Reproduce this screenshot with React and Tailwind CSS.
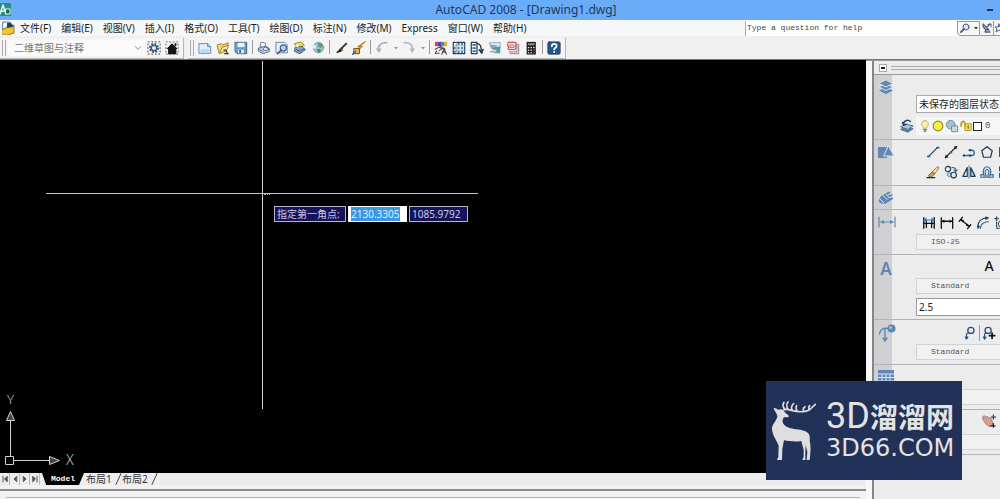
// src/App.jsx

const MENUS = [
  '文件(F)',
  '编辑(E)',
  '视图(V)',
  '插入(I)',
  '格式(O)',
  '工具(T)',
  '绘图(D)',
  '标注(N)',
  '修改(M)',
  'Express',
  '窗口(W)',
  '帮助(H)',
];

const Svg = ({ children, className = 'w-4 h-4', box = '0 0 16 16' }) => (
  <svg
    viewBox={box}
    className={`shrink-0 ${className}`}
    fill="none"
    strokeLinecap="round"
    strokeLinejoin="round"
    aria-hidden="true"
  >
    {children}
  </svg>
);

/* ---------- Toolbar icons ---------- */

const icons = {
  gear: (
    <Svg className="w-3.5 h-3.5">
      <rect x="1" y="1" width="14" height="14" stroke="#333" strokeDasharray="2 2" strokeLinecap="butt" />
      <circle cx="8" cy="8" r="4.6" stroke="#3d5a78" strokeWidth="2.4" strokeDasharray="2 1.6" strokeLinecap="butt" />
      <circle cx="8" cy="8" r="3.2" stroke="#3d5a78" strokeWidth="1.6" fill="#dfe8f0" />
    </Svg>
  ),
  home: (
    <Svg className="w-3.5 h-3.5">
      <rect x="1" y="1" width="14" height="14" stroke="#555" strokeDasharray="2 2" strokeLinecap="butt" />
      <path d="M8 2.5 14.5 9H13v6H3.500V9H1.500Z" fill="#151515" />
      <path d="M11 2.500h2V6h-2z" fill="#151515" />
    </Svg>
  ),
  blank: (
    <Svg className="w-3.5 h-3.5">
      <path d="M1.500 3h9.500l3.500 3.500V14h-13z" fill="#e3f1fb" stroke="#57809f" />
      <path d="M3 9h10v4H3z" fill="#b9dcf4" />
      <path d="M11 3v3.500h3.500" stroke="#57809f" />
    </Svg>
  ),
  open: (
    <Svg className="w-3.5 h-3.5">
      <path d="M1.500 4.500 6 3l1.500 1.500L14 2l-2.500 8L4 14z" fill="#f2d568" stroke="#9a7d1f" />
      <path d="m4 14 3-7 7.500-2-2.500 6z" fill="#fbe99a" stroke="#9a7d1f" />
      <path d="M9 10.500c2-1 3 0 3.500 3M10 14.500h4" stroke="#333" strokeWidth="1.400" />
    </Svg>
  ),
  save: (
    <Svg className="w-3.5 h-3.5">
      <path d="M1.500 1.500h13v13h-11l-2-2z" fill="#6c9cc4" stroke="#31597d" />
      <path d="M4 2h8v5H4z" fill="#e8f1f8" />
      <path d="M4.500 10h7v4h-7z" fill="#dbe6ee" />
      <path d="M6 10.500h2v3H6z" fill="#31597d" />
    </Svg>
  ),
  print: (
    <Svg className="w-3.5 h-3.5">
      <path d="m5 1.500 5 1-1 5-5-1z" fill="#fff" stroke="#5d7290" />
      <path d="m2 8 8-2 4 2.500V12l-7 2.500L2 12z" fill="#c3d1e3" stroke="#4c6386" />
      <ellipse cx="10" cy="9" rx="3" ry="1.800" fill="#eef3f9" stroke="#4c6386" />
      <path d="m2 9.500 5 2.500" stroke="#4c6386" />
    </Svg>
  ),
  preview: (
    <Svg className="w-3.5 h-3.5">
      <path d="M1.500 1.500h9.500l3 3v9h-12.500z" fill="#e4f0fa" stroke="#587b9b" />
      <circle cx="9.500" cy="8" r="3.500" fill="#b5d3ee" stroke="#3f6184" strokeWidth="1.300" />
      <path d="m7 10.500-4 4" stroke="#3f6184" strokeWidth="2" />
    </Svg>
  ),
  publish: (
    <Svg className="w-3.5 h-3.5">
      <path d="m2 3 7-2 4 4-7 4z" fill="#f6dc48" stroke="#8f7a1c" />
      <path d="m3 7 7-1 4 4-6 4.500L2 12z" fill="#8ba7ca" stroke="#36516f" />
      <path d="m3 9.500 5 2 5-3" stroke="#36516f" />
      <circle cx="5" cy="5" r="2" fill="#e8f1a8" />
    </Svg>
  ),
  globe: (
    <Svg className="w-3.5 h-3.5">
      <circle cx="8.500" cy="7.500" r="6" fill="#9dbdd3" stroke="#7d99ad" />
      <path d="M8 2.500c3-.5 5 1 5.500 3L11 8 8 6z" fill="#5f9a60" />
      <path d="M6.500 9.500 10 9l1.500 2-3 3z" fill="#4f8c50" />
      <path d="m1 4 5 1-1 4-4-1z" fill="#e6eef4" />
    </Svg>
  ),
  brush: (
    <Svg className="w-3.5 h-3.5">
      <path d="M14 3 8 9" stroke="#343434" strokeWidth="2" />
      <path d="M9 7.500c-3 0-3 4-7 5.500 4 1 7-.5 8-3.500z" fill="#221d1a" />
      <path d="m8 9 1.500 1.500" stroke="#a66f2c" strokeWidth="1.500" />
    </Svg>
  ),
  match: (
    <Svg className="w-3.5 h-3.5">
      <path d="m15 1-6 5h3L7 11l2-4-2-.5z" fill="#f4bd27" stroke="#a2691b" />
      <path d="M2.500 8.500h6v6h-6z" fill="#f2b24a" stroke="#603b20" />
      <path d="m1 15 3-3" stroke="#3b62a3" strokeWidth="2" />
    </Svg>
  ),
  undo: (
    <Svg className="w-3.5 h-3.5">
      <path d="M13.500 2C8 1.500 4 4 4 9.500" stroke="#aeb4bb" strokeWidth="2" />
      <path d="M1 8.500h6.500L4.500 14z" fill="#aeb4bb" />
    </Svg>
  ),
  redo: (
    <Svg className="w-3.5 h-3.5">
      <path d="M2.500 2C8 1.500 12 4 12 9.500" stroke="#b4bac0" strokeWidth="2" />
      <path d="M15 8.500H8.500l3 5.500z" fill="#b4bac0" />
    </Svg>
  ),
  props: (
    <Svg className="w-3.5 h-3.5">
      <path d="M1 1h3.500v5H1z" fill="#d23a8e" />
      <path d="M4.500 1H8v5H4.500z" fill="#6a3bc0" />
      <path d="M8 1h3.500v5H8z" fill="#2d8fc4" />
      <path d="M11.500 1H15v5h-3.500z" fill="#d9b32c" />
      <path d="m5 4 6 5M1.500 9.500 6 7l3 2-3 2M3 11.500 1.500 14H6" stroke="#5b3d3a" strokeWidth="1.300" />
      <path d="m9 15 2.500-7L14 15m-4-2.500h3" stroke="#3a3f46" strokeWidth="1.300" />
    </Svg>
  ),
  design: (
    <Svg className="w-3.5 h-3.5">
      <rect x="1.500" y="1.500" width="13" height="13" fill="#eef5fa" stroke="#24435f" strokeWidth="1.400" />
      <path d="M5 2v12M2 5.500h12M2 10.500h12" stroke="#8ea7bc" />
      <path d="M7 3.500h1M11 3.500h1M7 8h1M11 8h1M7 12.500h1M11 12.500h1M3 8h.5M3 12.500h.5" stroke="#24435f" strokeWidth="1.600" />
    </Svg>
  ),
  palettes: (
    <Svg className="w-3.5 h-3.5">
      <path d="M1.500 1.500H8v13H1.500z" fill="#f3f8fb" stroke="#24435f" strokeWidth="1.400" />
      <path d="M3.500 4.500h2.500M3.500 8h2.500M3.500 11.500h2.500" stroke="#3f74a5" strokeWidth="2" />
      <path d="M8 3c4 0 4.500 3 5 8M10.500 10l3 4 1.500-4.500" stroke="#253849" strokeWidth="1.600" />
    </Svg>
  ),
  sheets: (
    <Svg className="w-3.5 h-3.5">
      <path d="m2 2 12-.5V8L6 10z" fill="#d8e5ec" stroke="#9ab1bf" />
      <path d="M1.500 4 10 5v5L4 9z" fill="#86a8bd" />
      <path d="m5 8 9-2v8H6l4-3z" fill="#5f93ac" />
      <path d="M3 12h6" stroke="#9fb9a7" strokeWidth="2" />
    </Svg>
  ),
  markup: (
    <Svg className="w-3.5 h-3.5">
      <path d="M5 14.500h9.500V4M3.500 12.500h9V3" stroke="#8b6d76" />
      <path d="M2 2.500 3.500 1l2 1 2-1 1.500 1 2-.5.5 2-.5 2 .5 2-1 2-2 .5-2-.5-2 .5-2-1 .5-2-1-2z" fill="#fdeff0" stroke="#d3475a" strokeWidth="1.300" />
      <path d="M5 4.500h4v3H5z" stroke="#d3475a" />
    </Svg>
  ),
  calc: (
    <Svg className="w-3.5 h-3.5">
      <path d="M3 1h10.500v14.500H3z" fill="#221c1a" />
      <path d="M4.500 2.500H12V5H4.500z" fill="#7d9478" />
      <path d="M5 7.500h.5M8 7.500h.5M11 7.500h.5M5 10.500h.5M8 10.500h.5M5 13.500h.5M8 13.500h.5" stroke="#e9e4df" strokeWidth="1.500" />
      <path d="M11 10.500h.5M11 13.500h.5" stroke="#c9503c" strokeWidth="1.500" />
    </Svg>
  ),
  help: (
    <Svg className="w-3.5 h-3.5">
      <rect x="1" y="1" width="14" height="14" rx="1.500" fill="#22588c" stroke="#153d66" />
      <path d="M5.500 6c0-3.500 5.500-3.500 5.500-.3 0 2-2.800 2-2.800 4M8.200 12.500v.2" stroke="#fff" strokeWidth="2" />
    </Svg>
  ),
};

const ToolButton = ({ name, label }) => (
  <button type="button" aria-label={label} className="w-[18px] h-4 flex items-center justify-center shrink-0">
    {icons[name]}
  </button>
);

const Caret = ({ label }) => (
  <button type="button" aria-label={label} className="w-[9px] h-4 flex items-center justify-center shrink-0">
    <Svg className="w-1 h-1" box="0 0 4 4">
      <path d="M0 1h4L2 3.500z" fill="#999" />
    </Svg>
  </button>
);

const Separator = () => (
  <span className="w-[5px] h-4 flex justify-center shrink-0">
    <span className="w-px h-3.5 bg-[#9b9b9b]" />
  </span>
);

const Grip = () => (
  <span className="flex gap-0.5 h-4 px-0.5 shrink-0">
    <span className="w-px bg-[#a9a9a9]" />
    <span className="w-px bg-[#a9a9a9]" />
  </span>
);

/* ---------- Header ---------- */

const TitleBar = () => (
  <header className="h-5 shrink-0 bg-[#6aacf8] flex items-center">
    <Svg className="w-3 h-3.5" box="0 0 12 14">
      <path d="M0 0h11v13H0z" fill="#2c8d86" />
      <path d="M0 11 3 2l3 9M1 8h4" stroke="#e8fbf6" strokeWidth="1.500" />
      <path d="M6 6h4v5H6z" fill="#1c5c5e" stroke="#e8fbf6" />
    </Svg>
    <h1 className="flex-1 text-center text-[12px] leading-4 text-[#1d3a5c] pl-[60px]">
      AutoCAD 2008 - [Drawing1.dwg]
    </h1>
    <button type="button" aria-label="最小化" className="w-5 h-5 flex items-center justify-center">
      <span className="w-1.5 h-0.5 bg-[#20344d]" />
    </button>
  </header>
);

const MenuBar = () => (
  <div className="h-4 shrink-0 bg-[#f5f7f9] flex items-center overflow-hidden">
    <Svg className="w-3.5 h-3.5 ml-0.5" box="0 0 14 14">
      <path d="M1 1h7l2 3v4H1z" fill="#fff" stroke="#5b7da0" />
      <path d="m0 9 5-3 7-2v8l-6 2H0z" fill="#eec534" stroke="#8d762a" />
      <path d="M5 2c3-1 6 1 6 4L5 7z" fill="#243d66" />
    </Svg>
    <nav className="flex gap-2.5 ml-1">
      {MENUS.map((menu) => (
        <button key={menu} type="button" className="text-[10px] leading-4 text-[#1c1c1c] whitespace-nowrap">
          {menu}
        </button>
      ))}
    </nav>
    <div className="flex ml-auto h-[15px]">
      <input
        aria-label="Type a question for help"
        placeholder="Type a question for help"
        className="w-[212px] border-l border-[#aaa] bg-white px-px font-['Liberation_Mono','Noto_Sans_CJK_SC',monospace] text-[8px] placeholder:text-[#444] outline-none"
      />
      <button type="button" aria-label="搜索" className="w-[23px] border border-[#999] rounded-bl flex items-center justify-center gap-1 bg-[#f7f7f7]">
        <Svg className="w-2.5 h-2.5" box="0 0 10 10">
          <circle cx="6" cy="4" r="3" stroke="#4b5f88" fill="#dde8f5" />
          <path d="M4 6 1 9" stroke="#4b5f88" strokeWidth="1.800" />
        </Svg>
        <Svg className="w-1 h-1" box="0 0 4 4">
          <path d="M0 1h4L2 3.500z" fill="#333" />
        </Svg>
      </button>
      <button type="button" aria-label="通讯中心" className="w-3.5 border-b border-r border-[#999] flex items-center justify-center bg-[#f7f7f7]">
        <Svg className="w-2.5 h-2.5" box="0 0 10 10">
          <path d="M1 1c0 4 2 6 6 6zM5 4l3-3M3 9h5M4 6.500 3 9" stroke="#4b5f88" strokeWidth="1.300" />
          <path d="M6 1.500 9 1v3" stroke="#4b5f88" />
        </Svg>
      </button>
      <button type="button" aria-label="收藏夹" className="w-1.5 border-b border-[#999] overflow-hidden flex items-center bg-[#f7f7f7]">
        <Svg className="w-2.5 h-2.5" box="0 0 10 10">
          <path d="m5 1 1 3h3L7 6l1 3-3-2-3 2 1-3-2-2h3z" stroke="#4b5f88" />
        </Svg>
      </button>
    </div>
  </div>
);

const Toolbars = () => (
  <div className="h-6 shrink-0 bg-[#efefef] border-b border-[#777] flex items-start pt-0.5">
    <div className="w-[184px] h-[21px] flex items-center border-r border-b border-[#b5b5b5] bg-[#f4f4f4]">
      <Grip />
      <div className="relative flex items-center">
        <select
          aria-label="工作空间"
          className="appearance-none w-[137px] h-4 pl-1.5 bg-[#fafafa] text-[10px] leading-4 text-[#777] outline-none"
        >
          <option>二维草图与注释</option>
        </select>
        <Svg className="w-1.5 h-1.5 absolute right-1 pointer-events-none" box="0 0 6 6">
          <path d="m.5 1.500 2.500 3 2.500-3" stroke="#999" />
        </Svg>
      </div>
      <ToolButton name="gear" label="工作空间设置" />
      <ToolButton name="home" label="我的工作空间" />
    </div>
    <div className="ml-1 pr-0.5 h-[21px] flex items-center border-r border-b border-[#b5b5b5] bg-[#f4f4f4]">
      <Grip />
      <ToolButton name="blank" label="新建" />
      <ToolButton name="open" label="打开" />
      <ToolButton name="save" label="保存" />
      <Separator />
      <ToolButton name="print" label="打印" />
      <ToolButton name="preview" label="打印预览" />
      <ToolButton name="publish" label="发布" />
      <ToolButton name="globe" label="三维DWF" />
      <Separator />
      <ToolButton name="brush" label="特性匹配" />
      <ToolButton name="match" label="块编辑器" />
      <Separator />
      <ToolButton name="undo" label="放弃" />
      <Caret label="放弃列表" />
      <ToolButton name="redo" label="重做" />
      <Caret label="重做列表" />
      <Separator />
      <ToolButton name="props" label="特性" />
      <ToolButton name="design" label="设计中心" />
      <ToolButton name="palettes" label="工具选项板" />
      <ToolButton name="sheets" label="图纸集管理器" />
      <ToolButton name="markup" label="标记集管理器" />
      <ToolButton name="calc" label="快速计算器" />
      <Separator />
      <ToolButton name="help" label="帮助" />
    </div>
  </div>
);

/* ---------- Drawing area ---------- */

const DrawingArea = () => (
  <main className="relative flex-1 min-h-0 bg-black overflow-hidden">
    {/* Crosshair */}
    <div className="absolute left-[262px] top-px w-px h-[348px] bg-[#d8d8d8]" />
    <div className="absolute left-[46px] top-[133px] w-[432px] h-px bg-[#c8c8c8]" />
    <div className="absolute left-[264px] top-[134px] w-1.5 border-t border-dotted border-[#aaa]" />

    {/* Dynamic input */}
    <div className="absolute left-[274px] top-[146px] flex gap-0.5 text-[10px] leading-[14px] text-[#c9c9e6]">
      <label htmlFor="coord-x" className="w-[72px] h-4 px-0.5 border border-[#b4b4d0] bg-[#15145a] whitespace-nowrap">
        指定第一角点:
      </label>
      <div className="w-[59px] h-4 bg-white pl-[3px] py-px">
        <input
          id="coord-x"
          defaultValue="2130.3305"
          className="block w-[49px] h-3.5 bg-[#3b97e3] text-[#d9efff] outline-none"
        />
      </div>
      <input
        aria-label="Y"
        defaultValue="1085.9792"
        className="w-[59px] h-4 px-0.5 border border-[#b4b4d0] bg-[#15145a] outline-none"
      />
    </div>

    {/* UCS icon */}
    <svg viewBox="0 0 80 80" className="absolute left-0 bottom-1 w-20 h-20" fill="none" stroke="#d0d0d0">
      <path d="M5.500 67.500h8v8h-8zM10.500 67V32M14 71.500h35" />
      <path d="m10.500 22.500 4 9h-8zM59.500 71.500l-10-4v8z" fill="#444" />
      <text x="7" y="15" fontSize="13" fill="#c4c4c4" stroke="none" className="font-light">Y</text>
      <text x="66" y="76" fontSize="14" fill="#c4c4c4" stroke="none" className="font-light">X</text>
    </svg>
  </main>
);

const TabArrow = ({ d, label }) => (
  <button type="button" aria-label={label} className="w-2.5 h-3 border-r border-[#bbb] flex items-center justify-center">
    <Svg className="w-1.5 h-2" box="0 0 6 8">
      <path d={d} fill="#555" stroke="#555" />
    </Svg>
  </button>
);

const LayoutTab = ({ children }) => (
  <button type="button" className="flex items-center text-[10px] leading-3 text-[#333]">
    <span className="w-7 text-left">{children}</span>
    <Svg className="w-2 h-3" box="0 0 8 12">
      <path d="M2 11.500 7 .5" stroke="#444" />
    </Svg>
  </button>
);

const BottomBar = () => (
  <footer className="shrink-0 bg-[#f2f2f2]">
    <div className="h-3 flex bg-[#ededed]">
      <TabArrow label="第一个" d="M1 1v6M5 1.500 2.500 4 5 6.500z" />
      <TabArrow label="上一个" d="M4.500 1.500 2 4l2.500 2.500z" />
      <TabArrow label="下一个" d="M1.500 1.500 4 4 1.500 6.500z" />
      <TabArrow label="最后一个" d="M5 1v6M1 1.500 3.500 4 1 6.500z" />
      <button
        type="button"
        className="w-[42px] ml-0.5 h-3 bg-black text-white font-['Liberation_Mono',monospace] font-bold text-[8px] leading-3 text-center [clip-path:polygon(0_0,100%_0,88%_100%,10%_100%)]"
      >
        Model
      </button>
      <span className="w-0.5" />
      <LayoutTab>布局1</LayoutTab>
      <LayoutTab>布局2</LayoutTab>
    </div>
    <div className="mt-1 h-0.5 bg-[#8b8b8b]" />
    <div className="h-1.5" />
    <div className="h-px bg-[#b5b5b5] mx-1.5" />
    <div className="h-px" />
  </footer>
);

/* ---------- Dashboard panel ---------- */

const BLUE = '#5f87b5';

const strip = {
  layers: (
    <Svg>
      <path d="m8 8.500 7 3L8 15l-7-3.500z" fill={BLUE} />
      <path d="m8 5 7 3-7 3.500L1 8z" fill={BLUE} stroke="#dfe5ec" />
      <path d="m8 1 7 3.500L8 8 1 4.500z" fill={BLUE} stroke="#dfe5ec" />
    </Svg>
  ),
  shapes: (
    <Svg>
      <path d="M0 3h9v11H0z" fill={BLUE} />
      <path d="m10.500 2 5.500 10H6z" fill={BLUE} stroke="#dfe5ec" />
    </Svg>
  ),
  nav: (
    <Svg>
      <path d="m3 6 8-4.500 1.500 1L8 6l6.500-2v1.500L9 8.500l6-1V9l-8 5-5-1-1.500-2z" fill={BLUE} />
      <path d="m2 9 4 4M5 5.500l4 4M8 4l3 3.500" stroke="#dfe5ec" />
    </Svg>
  ),
  dim: (
    <Svg className="w-[18px] h-4" box="0 0 18 16">
      <path d="M1 3v10M17 3v10M3 8h12" stroke={BLUE} strokeWidth="1.200" />
      <path d="M2 8l4-2v4zM16 8l-4-2v4z" fill={BLUE} />
    </Svg>
  ),
  leader: (
    <Svg className="w-[18px] h-[18px]" box="0 0 18 18">
      <path d="M1.500 10C2 6 5 3.500 10 4.500M7 5v11M5 14l2 3 2-3" stroke={BLUE} strokeWidth="1.400" />
      <circle cx="13.500" cy="4.500" r="4" fill={BLUE} />
      <circle cx="12.500" cy="3.500" r="1.500" fill="#a9c1dc" />
    </Svg>
  ),
  table: (
    <Svg>
      <path d="M0 1h16v14H0z" fill={BLUE} />
      <path d="M0 5h16M0 8.500h16M0 12h16M4 5v10M8 5v10M12 5v10" stroke="#dce6f0" strokeLinecap="butt" />
    </Svg>
  ),
};

const INK = '#21384f';

const tools = {
  line: (
    <>
      <path d="M3 13 13 3" stroke={INK} strokeWidth="1.300" />
      <path d="M2 13h2M12.500 3h2" stroke="#1e6aa0" strokeWidth="2" />
    </>
  ),
  xline: (
    <>
      <path d="M1.500 14.500 14.500 1.500" stroke="#111" strokeWidth="1.400" />
      <path d="m1 15 1-4 3 3zM15 1l-4 1 3 3z" fill="#111" />
      <path d="M7.500 8.500h1" stroke="#1e6aa0" strokeWidth="2" />
    </>
  ),
  pline: (
    <>
      <path d="M2 12h9c4 0 4-6 0-6H8" stroke="#2d6ea0" strokeWidth="1.500" />
      <path d="M2 12h.5M9 6h.5M9 12h.5" stroke={INK} strokeWidth="2.500" />
    </>
  ),
  polygon: <path d="m8 2 6 4.500L12 14H4L2 6.500z" stroke={INK} strokeWidth="1.400" />,
  rect: <path d="M2 3h12v10H2z" stroke={INK} strokeWidth="1.400" />,
  erase: (
    <>
      <path d="m7 8 6-6 2 1-5 7z" fill="#f3e3a4" stroke="#8a6d2b" />
      <path d="m3 12 4-4 3 2-4 4z" fill="#d9a24c" stroke="#6d4a2c" />
      <path d="M1 14.500h9" stroke="#222" strokeWidth="1.300" />
    </>
  ),
  copy: (
    <>
      <circle cx="4.500" cy="4.500" r="3" stroke={INK} strokeWidth="1.300" />
      <circle cx="11" cy="11.500" r="3.200" stroke={INK} strokeWidth="1.300" />
      <circle cx="6" cy="11" r="2" stroke="#2d6ea0" />
      <path d="M9 3c3-.5 4.500 1 4.500 4M11.500 5.500l2 2 1.500-2" stroke="#2d6ea0" strokeWidth="1.300" />
    </>
  ),
  mirror: (
    <>
      <path d="M6 3v10H1z" stroke={INK} strokeWidth="1.300" />
      <path d="M10 3v10h5z" stroke={INK} strokeWidth="1.300" fill="#b8cfe2" />
      <path d="M8 1v14" stroke="#2d6ea0" />
    </>
  ),
  offset: (
    <>
      <path d="M1 14h14v-3h-3.500c2-5-.5-9-3.500-9S2.500 6 4.500 11H1z" stroke="#2d6ea0" strokeWidth="1.400" />
      <path d="M4 12.500h8M6.500 11C5 7.500 6.500 5 8 5s3 2.500 1.500 6" stroke={INK} />
    </>
  ),
  array: <path d="M2 2h4.500v4.500H2zM9.500 2H14v4.500H9.500zM2 9.500h4.500V14H2zM9.500 9.500H14V14H9.500z" stroke={INK} strokeWidth="1.400" />,
  quickDim: (
    <>
      <path d="M2 2v12M14 2v12M5 5v8M11 5v8" stroke="#111" strokeWidth="1.500" />
      <path d="M2 8.500h12" stroke="#111" strokeWidth="1.500" />
      <path d="M2 4.500h12M5 2.500 2.500 4.500 5 6.500M11 2.500l2.500 2-2.500 2" stroke="#3a76a8" strokeWidth="1.200" />
    </>
  ),
  linearDim: (
    <>
      <path d="M1.500 2v12M14.500 2v12M2 6h12" stroke="#111" strokeWidth="1.500" />
      <path d="m2 6 3-2v4zM14 6l-3-2v4z" fill="#111" />
    </>
  ),
  alignedDim: (
    <>
      <path d="m3 4 10 8M1.500 6 5 1.500M11 14.500 14.500 10" stroke="#111" strokeWidth="1.500" />
      <path d="m3 4 4 .5L5 7.500zM13 12l-4-.5 2-3z" fill="#111" />
    </>
  ),
  arcDim: (
    <>
      <path d="M2 12C2.500 6 6 2.500 13 2" stroke={INK} strokeWidth="1.300" />
      <path d="M5 14c.5-5 3-7 9-7.500" stroke="#3a76a8" strokeWidth="1.500" />
      <path d="M2 14v-3l2 1zM14 2l-3-1v2.500z" fill={INK} stroke={INK} />
    </>
  ),
  ordinate: (
    <>
      <path d="M1 3h4M3 1v4M3 7v7h12" stroke={INK} strokeWidth="1.300" strokeDasharray="2 1.500" />
      <circle cx="9" cy="9" r="4" stroke={INK} />
    </>
  ),
  leader: (
    <>
      <circle cx="9" cy="5" r="3.500" stroke="#24527f" strokeWidth="1.500" />
      <path d="M6.500 7.500 4 9v5M2.500 12.500 4 15l1.500-2.500" stroke="#24527f" strokeWidth="1.300" />
    </>
  ),
  leaderAdd: (
    <>
      <circle cx="7" cy="5" r="3.500" stroke="#24527f" strokeWidth="1.500" />
      <path d="M4.500 7.500 3 9v5M1.500 12.500 3 15l1.500-2.500" stroke="#24527f" strokeWidth="1.300" />
      <path d="M11.500 8v6M8.500 11h6" stroke="#111" strokeWidth="2" />
    </>
  ),
  hand: (
    <>
      <path d="m1 3 1.500-1L5 4l1-1.500L8 5l1.500-.5L12 9v4l-3 1.500L5 12 1.500 7z" fill="#d99c94" stroke="#a06a66" />
      <path d="M13 1v5M10.500 3.500h5" stroke="#234a7d" strokeWidth="1.400" />
      <path d="M10 13.500h5M13 11v4" stroke="#222" strokeWidth="1.400" />
    </>
  ),
};

const PanelTool = ({ name, label }) => (
  <button type="button" aria-label={label} className="w-[18px] h-[18px] flex items-center justify-center shrink-0">
    <Svg className="w-3.5 h-3.5">{tools[name]}</Svg>
  </button>
);

const Section = ({ icon, className, children }) => (
  <section className={`flex shrink-0 border-b border-[#b3b3bb] ${className}`}>
    <div className="w-[18px] shrink-0 bg-[#d0d0d2] pl-1 pt-1">{icon}</div>
    <div className="flex-1 min-w-0 overflow-hidden pl-6 flex flex-col justify-end">{children}</div>
  </section>
);

const StyleSelect = ({ label, value }) => (
  <select
    aria-label={label}
    className="appearance-none w-full h-4 shrink-0 border border-r-0 border-[#d3d3d3] bg-[#f1f1f1] pl-3.5 font-['Liberation_Mono',monospace] text-[8px] text-[#555] outline-none"
  >
    <option>{value}</option>
  </select>
);

const Dashboard = () => (
  <aside className="w-[134px] shrink-0 flex bg-[#ececec] border-t border-[#999] overflow-hidden">
    <div className="w-2 shrink-0 bg-[#f8f8f8] border-r-2 border-[#85858d]" />
    <div className="flex-1 min-w-0 flex flex-col">
      <div className="h-3.5 shrink-0 flex items-center gap-1 pl-[5px] border-b border-[#999]">
        <button type="button" aria-label="折叠" className="w-2 h-2 border border-[#aaa] bg-white flex items-center justify-center">
          <span className="w-1 h-0.5 bg-[#222]" />
        </button>
        <span className="flex-1 h-1 border-y border-[#aaa]" />
      </div>

      <Section icon={strip.layers} className="h-[65px]">
        <select
          aria-label="图层状态"
          className="appearance-none w-full h-[18px] shrink-0 border border-r-0 border-[#aaa] bg-white pl-0.5 text-[10px] leading-4 text-[#1c1c1c] outline-none"
        >
          <option>未保存的图层状态</option>
        </select>
        <div className="flex items-center h-[18px] mt-1 mb-1 -ml-4 shrink-0">
          <button type="button" aria-label="图层特性" className="w-4 shrink-0">
            <Svg className="w-3.5 h-3.5">
              <path d="m8 9 7 2-6 4-8-3z" fill="#5a7ea8" stroke="#47688c" />
              <path d="m8 6 7 2-6 4-8-3z" fill="#a9c3dd" stroke="#47688c" />
              <path d="M4 6c0-4 5-6 8-3M3 4l1 3 3-1" stroke="#1f3a5c" strokeWidth="1.600" />
            </Svg>
          </button>
          <div className="flex-1 h-[18px] flex items-center gap-px pl-[3px] bg-[#f6f6f6] text-[#555]">
            <Svg className="w-3 h-3">
              <path d="M8 1c-6 0-5 6-2.500 8v2h5V9C13 7 14 1 8 1z" fill="#fbf3ac" stroke="#a89d52" />
              <path d="M6 13h4M7 15h2" stroke="#556" strokeWidth="1.500" />
            </Svg>
            <Svg className="w-3 h-3">
              <circle cx="8" cy="8" r="6.500" fill="#f4f04a" stroke="#8f8d20" strokeWidth="1.500" />
            </Svg>
            <Svg className="w-3.5 h-3.5">
              <circle cx="6.500" cy="6.500" r="5" fill="#a9c3ce" stroke="#688794" />
              <path d="M8 8h6.500v6.500H8z" fill="#c9dbe4" stroke="#688794" />
            </Svg>
            <Svg className="w-3 h-3">
              <path d="M7 5h8v9H7z" fill="#f2e53c" stroke="#8a8427" />
              <path d="M7 8c0-9-6-7-5.500 0" stroke="#b5ab2a" strokeWidth="2.500" />
              <path d="M11 8v3" stroke="#8a8427" strokeWidth="2" />
            </Svg>
            <span className="w-[9px] h-[9px] border border-[#222] bg-white" />
            <span className="pl-0.5 font-['Liberation_Mono',monospace] text-[9px] leading-3">0</span>
          </div>
        </div>
      </Section>

      <Section icon={strip.shapes} className="h-[46px]">
        <div className="flex pl-2">
          <PanelTool name="line" label="直线" />
          <PanelTool name="xline" label="构造线" />
          <PanelTool name="pline" label="多段线" />
          <PanelTool name="polygon" label="正多边形" />
          <PanelTool name="rect" label="矩形" />
        </div>
        <div className="flex pl-2 mt-0.5 mb-1">
          <PanelTool name="erase" label="删除" />
          <PanelTool name="copy" label="复制" />
          <PanelTool name="mirror" label="镜像" />
          <PanelTool name="offset" label="偏移" />
          <PanelTool name="array" label="阵列" />
        </div>
      </Section>

      <Section icon={strip.nav} className="h-6" />

      <Section icon={strip.dim} className="h-[45px]">
        <div className="flex items-center pl-1 mb-0.5">
          <PanelTool name="quickDim" label="快速标注" />
          <span className="w-px h-4 bg-[#999]" />
          <PanelTool name="linearDim" label="线性" />
          <PanelTool name="alignedDim" label="对齐" />
          <PanelTool name="arcDim" label="弧长" />
          <PanelTool name="ordinate" label="坐标" />
        </div>
        <StyleSelect label="标注样式" value="ISO-25" />
        <div className="h-1 shrink-0" />
      </Section>

      <Section
        icon={<span className="block w-4 text-center text-[17px] leading-5 font-semibold text-[#5f87b5]">A</span>}
        className="h-[65px]"
      >
        <button type="button" aria-label="多行文字" className="self-end mr-1 mb-1 w-3.5 text-[14px] leading-4 font-medium text-[#111]">
          A
        </button>
        <StyleSelect label="文字样式" value="Standard" />
        <input
          aria-label="文字高度"
          defaultValue="2.5"
          className="w-full h-[18px] mt-1 mb-[3px] shrink-0 border border-r-0 border-[#999] bg-white pl-0.5 text-[10px] text-[#222] outline-none"
        />
      </Section>

      <Section icon={strip.leader} className="h-[45px]">
        <div className="flex items-center justify-end pr-0.5 mb-0.5">
          <PanelTool name="leader" label="多重引线" />
          <span className="w-px h-4 bg-[#999]" />
          <PanelTool name="leaderAdd" label="添加引线" />
        </div>
        <StyleSelect label="引线样式" value="Standard" />
        <div className="h-1 shrink-0" />
      </Section>

      <Section icon={strip.table} className="h-[45px]">
        <StyleSelect label="表格样式" value="" />
        <div className="h-1 shrink-0" />
      </Section>

      <Section className="h-[45px]">
        <div className="flex justify-end pr-0.5 mb-1">
          <PanelTool name="hand" label="平移" />
        </div>
        <StyleSelect label="视图" value="" />
        <div className="h-1 shrink-0" />
      </Section>
    </div>
  </aside>
);

/* ---------- Watermark ---------- */

const Watermark = () => (
  <div className="absolute right-[38px] bottom-[19px] w-[196px] h-[99px] bg-[#223158] text-[#e3e3e3] flex items-center pl-1">
    <Svg className="w-[50px] h-[60px]" box="12 16 150 180">
      <path
        d="M23 37C28 37 33 39 36 43 42 39 50 41 54 47l8 8c4 2 7 5 6 8-4 2-10 2-14 2-5 6-6 14-1 21 7 9 21 13 37 15 18 2 32 5 38 13 4 7 4 13 3 20 4 18 3 36 0 59h-9l2-24-5-20-1 22v22h-9l4-10v-20l-7-27C90 139 70 137 54 134l-5 26-1 33H33l4-10 1-33C30 130 18 118 18 98c0-12 13-22 16-35 1-8-9-16-11-26z"
        fill="#dedede"
      />
      <path
        d="M52 43C58 40 66 41 76 44c22 6 42 5 54-1l18-17M57 41C50 34 50 26 54 20M67 42C60 34 62 24 66 19M79 44c-5-7-1-16 4-20M94 46c-6-6-5-10-2-16M113 47c-3-7-1-11 4-14M130 42c-3-5-2-9 1-12"
        stroke="#dedede"
        strokeWidth="5"
      />
    </Svg>
    <div className="pl-1.5 pt-0.5 whitespace-nowrap">
      <p className="flex items-center h-8">
        <span className="w-11 font-[Roboto,sans-serif] text-[36px] leading-8">3D</span>
        <span className="font-['Noto_Sans_CJK_SC',sans-serif] font-bold text-[28px] leading-8">溜溜网</span>
      </p>
      <p className="font-['DejaVu_Sans',sans-serif] text-[24px] leading-8">3D66.COM</p>
    </div>
  </div>
);

const App = () => (
  <div className="relative h-screen flex flex-col overflow-hidden bg-[#efefef] font-['Noto_Sans','Noto_Sans_CJK_SC',sans-serif]">
    <TitleBar />
    <MenuBar />
    <Toolbars />
    <div className="flex-1 min-h-0 flex">
      <div className="flex-1 min-w-0 flex flex-col">
        <DrawingArea />
        <BottomBar />
      </div>
      <Dashboard />
    </div>
    <Watermark />
  </div>
);

export default App;
